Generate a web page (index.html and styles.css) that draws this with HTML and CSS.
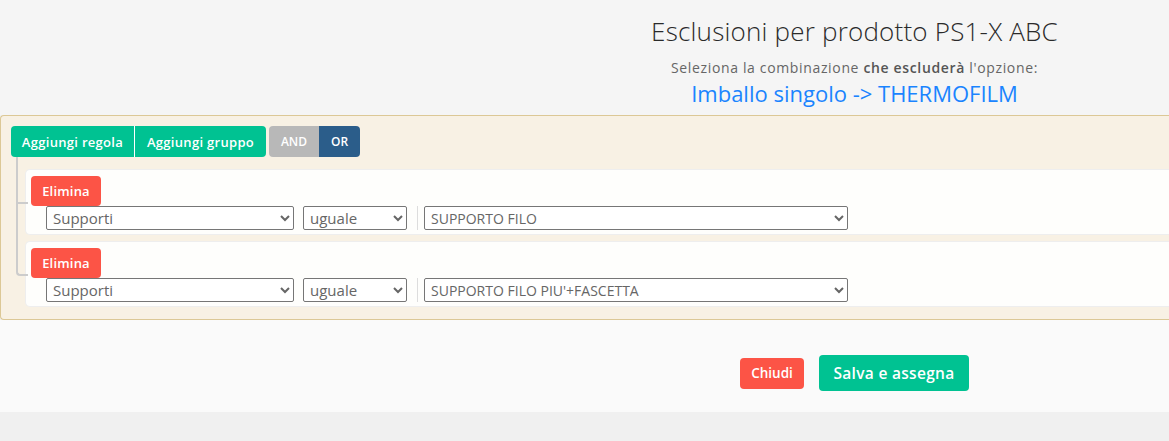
FILE: index.html
```html
<!DOCTYPE html>
<html lang="it">
<head>
<meta charset="utf-8">
<title>Esclusioni per prodotto</title>
<link rel="stylesheet" href="styles.css">
</head>
<body>
<div class="modal">
  <header class="modal-header">
    <h1 class="title">Esclusioni per prodotto PS1-X ABC</h1>
    <p class="subtitle">Seleziona la combinazione <b>che escluderà</b> l'opzione:</p>
    <a class="option-link" href="#">Imballo singolo -&gt; THERMOFILM</a>
  </header>

  <section class="builder">
    <div class="group-header">
      <div class="btn-group">
        <button class="btn btn-green">Aggiungi regola</button>
        <button class="btn btn-green">Aggiungi gruppo</button>
      </div>
      <div class="btn-group conditions">
        <button class="btn btn-gray">AND</button>
        <button class="btn btn-navy">OR</button>
      </div>
    </div>
    <div class="rules-list">
      <div class="rule">
        <button class="btn btn-red btn-del">Elimina</button>
        <div class="rule-fields">
          <select class="sel sel-filter"><option>Supporti</option></select>
          <select class="sel sel-op"><option>uguale</option></select>
          <span class="divider"></span>
          <select class="sel sel-value"><option>SUPPORTO FILO</option></select>
        </div>
      </div>
      <div class="rule">
        <button class="btn btn-red btn-del">Elimina</button>
        <div class="rule-fields">
          <select class="sel sel-filter"><option>Supporti</option></select>
          <select class="sel sel-op"><option>uguale</option></select>
          <span class="divider"></span>
          <select class="sel sel-value"><option>SUPPORTO FILO PIU'+FASCETTA</option></select>
        </div>
      </div>
    </div>
  </section>

  <footer class="modal-footer">
    <button class="btn btn-red btn-close">Chiudi</button>
    <button class="btn btn-green btn-save">Salva e assegna</button>
  </footer>
</div>
</body>
</html>
```

FILE: styles.css
```css
* { box-sizing: border-box; }
html, body { margin: 0; padding: 0; }
body {
  background: #f0f0f0;
  font-family: "Open Sans", "Noto Sans", sans-serif;
  overflow: hidden;
  width: 1169px;
  height: 441px;
}
.modal { width: 100%; }

.modal-header {
  background: #f5f5f5;
  height: 115px;
  padding: 16px 0 0 540px;
  text-align: center;
}
.title {
  margin: 0;
  font-size: 26px;
  line-height: 30px;
  font-weight: 300;
  letter-spacing: 0.2px;
  color: #2a2a2a;
}
.subtitle {
  margin: 12px 0 0;
  font-size: 14px;
  line-height: 19px;
  letter-spacing: 0.65px;
  color: #666;
}
.subtitle b { font-weight: 600; color: #555; }
.option-link {
  display: inline-block;
  margin-top: 3px;
  font-size: 22px;
  line-height: 27px;
  color: #1a84ff;
  text-decoration: none;
}

.builder {
  background: #f8f1e4;
  border: 1px solid #dcc896;
  border-right: none;
  border-radius: 4px 0 0 4px;
  padding: 10px 0 12px 10px;
  height: 205px;
  margin-right: -20px;
}
.group-header { display: flex; gap: 3px; height: 31px; }
.btn-group { display: flex; }
.btn {
  font-family: inherit;
  border: none;
  color: #fff;
  font-weight: 600;
  font-size: 13px;
  letter-spacing: 0.3px;
  cursor: pointer;
  padding: 0;
}
.btn-group .btn { height: 31px; }
.btn-group .btn:first-child { border-radius: 4px 0 0 4px; }
.btn-group .btn:last-child { border-radius: 0 4px 4px 0; }
.btn-green { background: #00c292; }
.btn-group .btn-green:first-child { width: 124px; border-right: 1px solid #fff; }
.btn-group .btn-green:last-child { width: 131px; }
.btn-gray { background: #b8b8b8; width: 50px; font-size: 12px; letter-spacing: 0; }
.btn-navy { background: #2b5d8a; width: 41px; font-size: 12px; letter-spacing: 0; }
.btn-red { background: #fc5446; }

.rules-list {
  margin-top: 12px;
  padding-left: 14px;
  display: flex;
  flex-direction: column;
  gap: 6px;
}
.rule {
  position: relative;
  background: #fefefc;
  border: 1px solid #eee;
  border-right: none;
  border-radius: 5px 0 0 5px;
  padding: 6px 0 4px 5px;
  height: 66px;
}
.rule::before {
  content: "";
  position: absolute;
  left: -10px;
  top: -13px;
  width: 10px;
  height: calc(50% + 13px);
  border-left: 2px solid #ccc;
  border-bottom: 2px solid #ccc;
}
.rule + .rule::before { top: -8px; height: calc(50% + 8px); border-bottom-left-radius: 4px; }
.rule:not(:last-child)::after {
  content: "";
  position: absolute;
  left: -10px;
  top: 50%;
  width: 10px;
  height: calc(50% + 8px);
  border-left: 2px solid #ccc;
}
.btn-del {
  display: block;
  width: 70px;
  height: 30px;
  border-radius: 4px;
  letter-spacing: 0.2px;
}
.rule-fields {
  display: flex;
  align-items: center;
  padding-left: 15px;
  height: 24px;
}
.sel {
  font-family: inherit;
  font-size: 15px;
  color: #666;
  height: 24px;
  border: 1px solid #767676;
  border-radius: 2px;
  background: #fff;
  padding: 0 2px;
}
.sel-filter { width: 248px; }
.sel-op { width: 104px; margin-left: 9px; }
.divider { width: 1px; height: 24px; background: #ddd; margin: 0 6px 0 10px; }
.sel-value { width: 424px; font-size: 14px; }

.modal-footer {
  background: #fafafa;
  height: 92px;
  padding: 35px 200px 0 0;
  display: flex;
  justify-content: flex-end;
  align-items: center;
  gap: 15px;
  align-content: flex-start;
  flex-wrap: wrap;
}
.btn-close { width: 64px; height: 31px; border-radius: 4px; font-size: 13.5px; letter-spacing: 0; }
.btn-save { width: 150px; height: 36px; border-radius: 4px; font-size: 15.5px; letter-spacing: 0.3px; }
```
